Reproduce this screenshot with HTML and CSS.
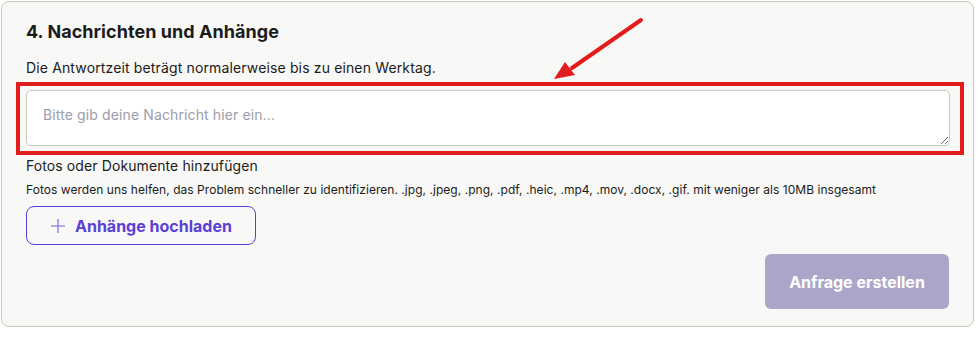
FILE: index.html
```html
<!DOCTYPE html>
<html lang="de">
<head>
    <meta charset="UTF-8">
    <meta name="viewport" content="width=device-width, initial-scale=1.0">
    <title>Nachrichten und Anhänge</title>
    <link rel="stylesheet" href="styles.css">
</head>
<body>
    <div class="card">
        <h2 class="title">4. Nachrichten und Anhänge</h2>
        <p class="hint">Die Antwortzeit beträgt normalerweise bis zu einen Werktag.</p>

        <!-- Markierung um das Textfeld -->
        <div class="highlight">
            <textarea class="message" placeholder="Bitte gib deine Nachricht hier ein..."></textarea>
        </div>

        <p class="label">Fotos oder Dokumente hinzufügen</p>
        <p class="small">Fotos werden uns helfen, das Problem schneller zu identifizieren. .jpg, .jpeg, .png, .pdf, .heic, .mp4, .mov, .docx, .gif. mit weniger als 10MB insgesamt</p>

        <button class="upload">
            <svg width="16" height="16" viewBox="0 0 16 16"><path d="M8 1v14M1 8h14" stroke="#9c8de6" stroke-width="1.6" fill="none"/></svg>
            Anhänge hochladen
        </button>

        <div class="actions">
            <button class="submit" disabled>Anfrage erstellen</button>
        </div>

        <svg class="arrow" width="100" height="70" viewBox="0 0 100 70">
            <line x1="89" y1="9" x2="20" y2="57" stroke="#e21b1b" stroke-width="4" stroke-linecap="round"/>
            <polygon points="2,68 13,51 23,64" fill="#e21b1b"/>
        </svg>
    </div>
</body>
</html>
```

FILE: styles.css
```css
body {
    margin: 0;
    padding: 1px;
    background-color: #fff;
    font-family: Inter, "Open Sans", sans-serif;
    color: #1b1b1b;
}
.card {
    position: relative;
    box-sizing: border-box;
    width: 973px;
    height: 326px;
    padding: 15px 24px 0 24px;
    background-color: #f8f8f6;
    border: 1px solid #c8c8bd;
    border-radius: 8px;
}
.title {
    margin: 0;
    font-size: 18px;
    font-weight: 700;
    line-height: 30px;
    letter-spacing: 0.05px;
}
.hint {
    margin: 11px 0 0 0;
    font-size: 14px;
    line-height: 20px;
    letter-spacing: 0.14px;
}
.highlight {
    margin: 4px -15px 0 -10px;
    padding: 4px 10px 5px 6px;
    border: 4px solid #e21b1b;
}
.message {
    display: block;
    box-sizing: border-box;
    width: 100%;
    height: 56px;
    padding: 15px 16px;
    border: 1px solid #c8c8bd;
    border-radius: 5px;
    background-color: #fff;
    font-family: inherit;
    font-size: 14px;
    letter-spacing: 0.12px;
    color: #1b1b1b;
}
.message::placeholder {
    color: #9d9dab;
}
.label {
    margin: 1px 0 0 0;
    font-size: 14px;
    line-height: 20px;
    letter-spacing: 0.1px;
}
.small {
    margin: 5px 0 0 0;
    font-size: 12px;
    line-height: 18px;
    letter-spacing: 0.04px;
}
.upload {
    display: flex;
    align-items: center;
    gap: 9px;
    margin-top: 7px;
    height: 39px;
    padding: 0 23px;
    border: 1px solid #5a3fd6;
    border-radius: 8px;
    background-color: transparent;
    color: #5a3fd6;
    font-family: inherit;
    font-size: 16px;
    font-weight: 700;
}
.actions {
    display: flex;
    justify-content: flex-end;
    margin-top: 9px;
}
.submit {
    width: 184px;
    height: 55px;
    border: none;
    border-radius: 6px;
    background-color: #aba6c9;
    color: #fff;
    font-family: inherit;
    font-size: 16px;
    font-weight: 700;
}
.arrow {
    position: absolute;
    left: 550px;
    top: 9px;
}
```
